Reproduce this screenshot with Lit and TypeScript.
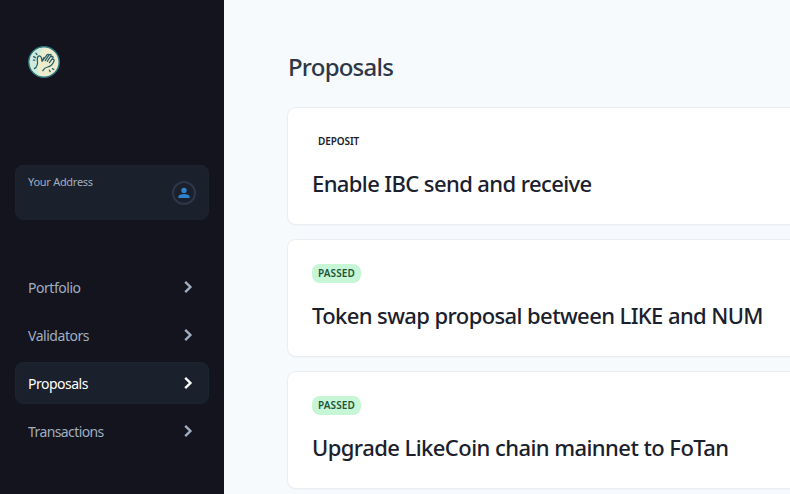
import { LitElement, html, css, svg } from "lit";
import { customElement, property } from "lit/decorators.js";
import { classMap } from "lit/directives/class-map.js";

@customElement("nav-item")
class NavItem extends LitElement {
  @property() label = "";
  @property({ type: Boolean }) active = false;
  @property({ type: Number }) spacing = 0;

  static styles = css`
    :host { display: block; }
    .item {
      box-sizing: border-box;
      display: flex;
      align-items: center;
      justify-content: space-between;
      height: 42px;
      padding: 0 12px;
      border: 1px solid transparent;
      border-radius: 8px;
      color: #a0aec0;
      font-size: 14px;
      line-height: 20px;
    }
    .active { background: #1a202c; border-color: #1b2430; color: #fff; }
    .label { padding-top: 1px; white-space: nowrap; }
    svg { display: block; width: 16px; height: 16px; }
  `;

  render() {
    return html`
      <div class=${classMap({ item: true, active: this.active })}>
        <span class="label" style="letter-spacing:${this.spacing}px">${this.label}</span>
        <svg viewBox="0 0 16 16" fill="none" stroke="currentColor" stroke-width="2.4">
          <path d="M5.2 2.9 10.4 8 5.2 13.1" />
        </svg>
      </div>
    `;
  }
}

@customElement("proposal-card")
class ProposalCard extends LitElement {
  @property() status = "";
  @property() heading = "";
  @property({ type: Number }) spacing = 0;

  static styles = css`
    :host { display: block; }
    .card {
      box-sizing: border-box;
      height: 116px;
      padding: 24px;
      border-radius: 8px;
      background: #fff;
      box-shadow: 0 0 0 1px #e9eef4, 0 1px 3px rgba(0, 0, 0, 0.05);
    }
    .badge {
      display: block;
      width: fit-content;
      height: 19px;
      padding: 0 6px;
      border-radius: 8px;
      color: #1a202c;
      font-size: 10px;
      font-weight: 600;
      line-height: 19px;
      letter-spacing: -0.1px;
    }
    .passed { background: #c6f6d5; color: #22543d; letter-spacing: 0.12px; }
    h2 {
      margin: 14px 0 0;
      color: #1a202c;
      font-size: 22px;
      font-weight: 500;
      line-height: 36px;
      white-space: nowrap;
    }
  `;

  render() {
    return html`
      <article class="card">
        <span class=${classMap({ badge: true, passed: this.status === "PASSED" })}>${this.status}</span>
        <h2><span style="letter-spacing:${this.spacing}px">${this.heading}</span></h2>
      </article>
    `;
  }
}

const logo = svg`
  <circle cx="16" cy="16" r="15.2" fill="#ecedcd" stroke="#2d7780" stroke-width="1.5" />
  <path d="M1.7 16A14.3 14.3 0 0 1 16 1.7Q7 12 11 29.4A14.3 14.3 0 0 1 1.7 16" fill="#cfebdd" />
  <g fill="none" stroke="#285e68" stroke-width="1.25" stroke-linecap="round" stroke-linejoin="round">
    <path d="M6.4 22.6C9.8 20.5 10 17.5 9.3 13.6q-.2-3.4 2-3.8 1.7-.1 2.2 2.3l.5 3 2-3.6" />
    <path d="M14.4 15 19 8.8q1.6-1 1.7.6l-3.5 5.2M20.6 9.6q2-2.2 2.6-.3l-4 6M23.2 10.8q2-1 1.9.8l-3.7 5M25.1 13.4q1.6.2.7 2.2C24.5 18.8 22.5 20.6 19.6 21q-3 .6-4.8 3.6" />
    <path d="M5.6 10.6 7.4 11.6M7.8 7.2l1.2 1.5M5.4 14h1.4M21.3 24.2l.9 1.4M24.4 22.6l1.4.9" />
  </g>
`;

@customElement("app-root")
class AppRoot extends LitElement {
  private nav = [
    { label: "Portfolio", spacing: -0.46 },
    { label: "Validators", spacing: -0.46 },
    { label: "Proposals", spacing: -0.5, active: true },
    { label: "Transactions", spacing: -0.6 },
  ];

  private proposals = [
    { status: "DEPOSIT", heading: "Enable IBC send and receive", spacing: -0.6 },
    { status: "PASSED", heading: "Token swap proposal between LIKE and NUM", spacing: -0.6 },
    { status: "PASSED", heading: "Upgrade LikeCoin chain mainnet to FoTan", spacing: -0.56 },
  ];

  static styles = css`
    :host {
      display: flex;
      height: 494px;
      overflow: hidden;
      background: #f7fafc;
      font-family: "Noto Sans", "Open Sans", sans-serif;
    }
    aside {
      box-sizing: border-box;
      flex: 0 0 224px;
      padding: 46px 15px 0;
      background: #14141e;
    }
    .logo { display: block; width: 32px; height: 32px; margin-left: 13px; }
    .address {
      box-sizing: border-box;
      display: flex;
      justify-content: space-between;
      height: 55px;
      margin-top: 87px;
      padding: 8px 12px 0;
      border: 1px solid #1c232e;
      border-radius: 8px;
      background: #1a202c;
      color: #a0aec0;
      font-size: 11px;
      line-height: 16px;
    }
    .address-label { letter-spacing: -0.28px; }
    .avatar {
      box-sizing: border-box;
      display: grid;
      place-items: center;
      width: 24px;
      height: 24px;
      margin-top: 7px;
      border: 2px solid #2d3748;
      border-radius: 50%;
    }
    .avatar svg { display: block; width: 12px; height: 12px; }
    nav { display: grid; gap: 6px; margin-top: 46px; }
    main { flex: 0 0 700px; padding-left: 64px; }
    h1 {
      margin: 49px 0 23px;
      color: #2d3748;
      font-size: 24px;
      font-weight: 500;
      line-height: 36px;
    }
    .title { letter-spacing: -0.78px; }
    .list { display: grid; gap: 16px; }
  `;

  render() {
    return html`
      <aside>
        <svg class="logo" viewBox="0 0 32 32">${logo}</svg>
        <div class="address">
          <span class="address-label">Your Address</span>
          <span class="avatar">
            <svg viewBox="0 0 12 12" fill="#3182ce">
              <circle cx="6" cy="3.4" r="2.7" />
              <path d="M.4 11V9.6C.4 7.9 3 7 6 7s5.6.9 5.6 2.6V11z" />
            </svg>
          </span>
        </div>
        <nav>
          ${this.nav.map((n) => html`<nav-item .label=${n.label} .spacing=${n.spacing} .active=${!!n.active}></nav-item>`)}
        </nav>
      </aside>
      <main>
        <h1><span class="title">Proposals</span></h1>
        <div class="list">
          ${this.proposals.map((p) => html`<proposal-card .status=${p.status} .heading=${p.heading} .spacing=${p.spacing}></proposal-card>`)}
        </div>
      </main>
    `;
  }
}
